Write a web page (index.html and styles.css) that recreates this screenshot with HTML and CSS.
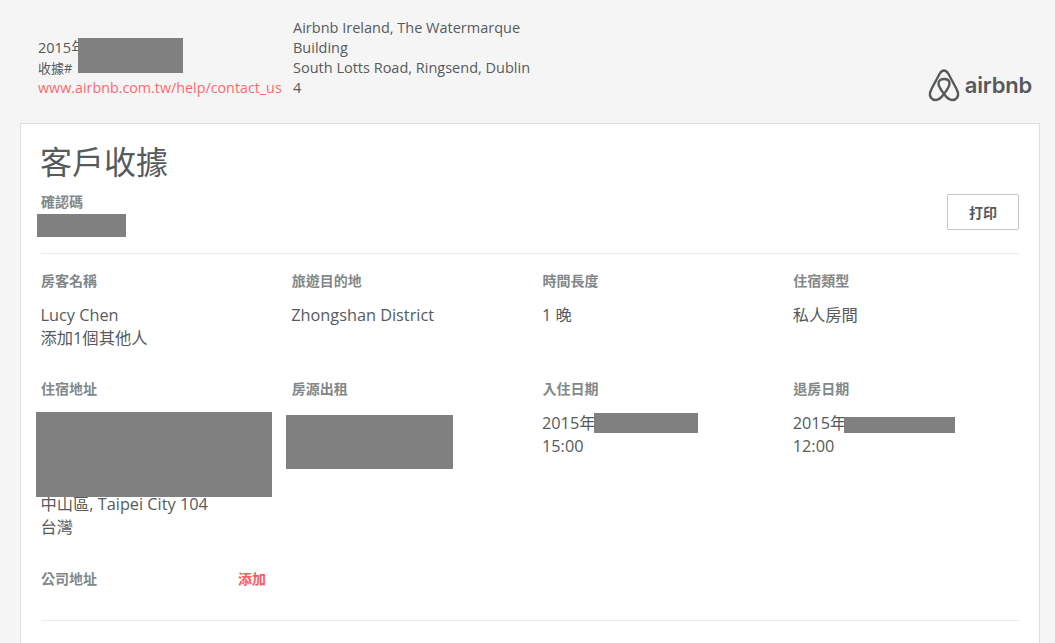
FILE: index.html
```html
<!DOCTYPE html>
<html lang="zh-Hant">
<head>
<meta charset="utf-8">
<title>客戶收據</title>
<link rel="stylesheet" href="styles.css">
</head>
<body>
<header class="top">
  <div class="meta">
    <div class="line">2015年</div>
    <div class="line small">收據#</div>
    <a class="line link" href="#">www.airbnb.com.tw/help/contact_us</a>
    <span class="redact redact-meta"></span>
  </div>
  <address class="office">
    <div class="line">Airbnb Ireland, The Watermarque</div>
    <div class="line">Building</div>
    <div class="line">South Lotts Road, Ringsend, Dublin</div>
    <div class="line">4</div>
  </address>
  <div class="logo">
    <svg class="belo" viewBox="0 0 32 33" width="32" height="33" aria-hidden="true"><path d="M16 25C13 21 10.5 17.5 10.5 14.5C10.5 11.5 13 10 16 10C19 10 21.5 11.5 21.5 14.5C21.5 17.5 19 21 16 25C13.5 28.5 11 31 7.5 31C3.5 31 1.3 27.5 2 24C2.3 22.5 3 21 4 19L11.5 5C13 2.5 14 1.5 16 1.5C18 1.5 19 2.5 20.5 5L28 19C29 21 29.7 22.5 30 24C30.7 27.5 28.5 31 24.5 31C21 31 18.5 28.5 16 25Z"/></svg>
    <span class="wordmark">airbnb</span>
  </div>
</header>
<main class="card">
  <section class="head">
    <div>
      <h1 class="title">客戶收據</h1>
      <div class="label code-label">確認碼</div>
      <div class="code-slot"><span class="redact redact-code"></span></div>
    </div>
    <button class="print" type="button">打印</button>
  </section>
  <section class="grid">
    <div class="cell row-one">
      <div class="label">房客名稱</div>
      <div class="value">Lucy Chen</div>
      <div class="value">添加1個其他人</div>
    </div>
    <div class="cell row-one">
      <div class="label">旅遊目的地</div>
      <div class="value">Zhongshan District</div>
    </div>
    <div class="cell row-one">
      <div class="label">時間長度</div>
      <div class="value">1 晚</div>
    </div>
    <div class="cell row-one">
      <div class="label">住宿類型</div>
      <div class="value">私人房間</div>
    </div>
    <div class="cell">
      <div class="label">住宿地址</div>
      <div class="addr-slot"><span class="redact redact-addr"></span></div>
      <div class="value">中山區, Taipei City 104</div>
      <div class="value">台灣</div>
    </div>
    <div class="cell">
      <div class="label">房源出租</div>
      <div class="host-slot"><span class="redact redact-host"></span></div>
    </div>
    <div class="cell">
      <div class="label">入住日期</div>
      <div class="value date">2015年<span class="redact redact-in"></span></div>
      <div class="value">15:00</div>
    </div>
    <div class="cell">
      <div class="label">退房日期</div>
      <div class="value date">2015年<span class="redact redact-out"></span></div>
      <div class="value">12:00</div>
    </div>
  </section>
  <section class="company">
    <div class="label">公司地址</div>
    <a class="add" href="#">添加</a>
  </section>
  <hr class="rule">
</main>
</body>
</html>
```

FILE: styles.css
```css
* { box-sizing: border-box; }
html, body { height: 100%; overflow: hidden; }
body {
  margin: 0;
  background: #f5f5f5;
  color: #565a5c;
  font-family: "Open Sans", "Noto Sans CJK TC", sans-serif;
  font-size: 14.5px;
}
.top {
  display: flex;
  align-items: flex-end;
  height: 123px;
  padding: 18px 23px 25px 38px;
}
.meta { position: relative; width: 255px; }
.line { display: block; line-height: 20px; }
.small { font-size: 13px; }
.link { color: #ff5a5f; text-decoration: none; opacity: .9; font-size: 14.3px; }
.office { font-style: normal; width: 250px; }
.logo {
  margin-left: auto;
  display: flex;
  align-items: center;
  gap: 5px;
  margin-bottom: -4px;
}
.belo { display: block; fill: none; stroke: #565a5c; stroke-width: 2.4; }
.wordmark { font-family: Inter, sans-serif; font-weight: 600; font-size: 22px; line-height: 33px; letter-spacing: -.2px; }
.card {
  margin: 0 15px 0 20px;
  height: 700px;
  padding: 16px 20px 0 20px;
  background: #fff;
  border: 1px solid #dce0e0;
}
.head {
  display: flex;
  justify-content: space-between;
  height: 114px;
  border-bottom: 1px solid #e8ebeb;
}
.title { margin: 0 0 0 -1px; font-size: 32px; font-weight: 400; line-height: 44px; }
.label { font-size: 14px; font-weight: 700; line-height: 18px; color: #82888a; }
.code-label { margin-top: 9px; }
.code-slot { position: relative; height: 23px; }
.print {
  align-self: flex-start;
  width: 72px;
  height: 36px;
  margin-top: 54px;
  padding: 0;
  background: #fff;
  border: 1px solid #c4c4c4;
  border-radius: 2px;
  color: #565a5c;
  font: 700 14px "Open Sans", "Noto Sans CJK TC", sans-serif;
}
.grid {
  display: grid;
  grid-template-columns: repeat(4, 250.75px);
  padding-top: 18px;
}
.row-one { height: 108px; }
.cell .label { margin-bottom: 14px; }
.value { font-size: 16.3px; line-height: 22px; margin-left: -.5px; }
.value + .value { margin-top: .5px; }
.date { position: relative; }
.addr-slot { position: relative; height: 81px; }
.host-slot { position: relative; height: 60px; }
.company {
  display: flex;
  justify-content: space-between;
  width: 225px;
  margin-top: 32px;
}
.add { font-size: 14px; font-weight: 700; line-height: 18px; color: #ff5a5f; text-decoration: none; }
.rule { margin: 32px 0 0; border: 0; border-top: 1px solid #e8ebeb; }
.redact { position: absolute; display: block; background: #808080; }
.redact-meta { left: 40px; top: 0; width: 105px; height: 35px; }
.redact-code { left: -4px; top: 3px; width: 89px; height: 23px; }
.redact-addr { left: -5px; top: 0; width: 236px; height: 85px; }
.redact-host { left: -6px; top: 3px; width: 167px; height: 54px; }
.redact-in { left: 52px; top: 1px; width: 104px; height: 20px; }
.redact-out { left: 51.5px; top: 5px; width: 111px; height: 16px; }
```
